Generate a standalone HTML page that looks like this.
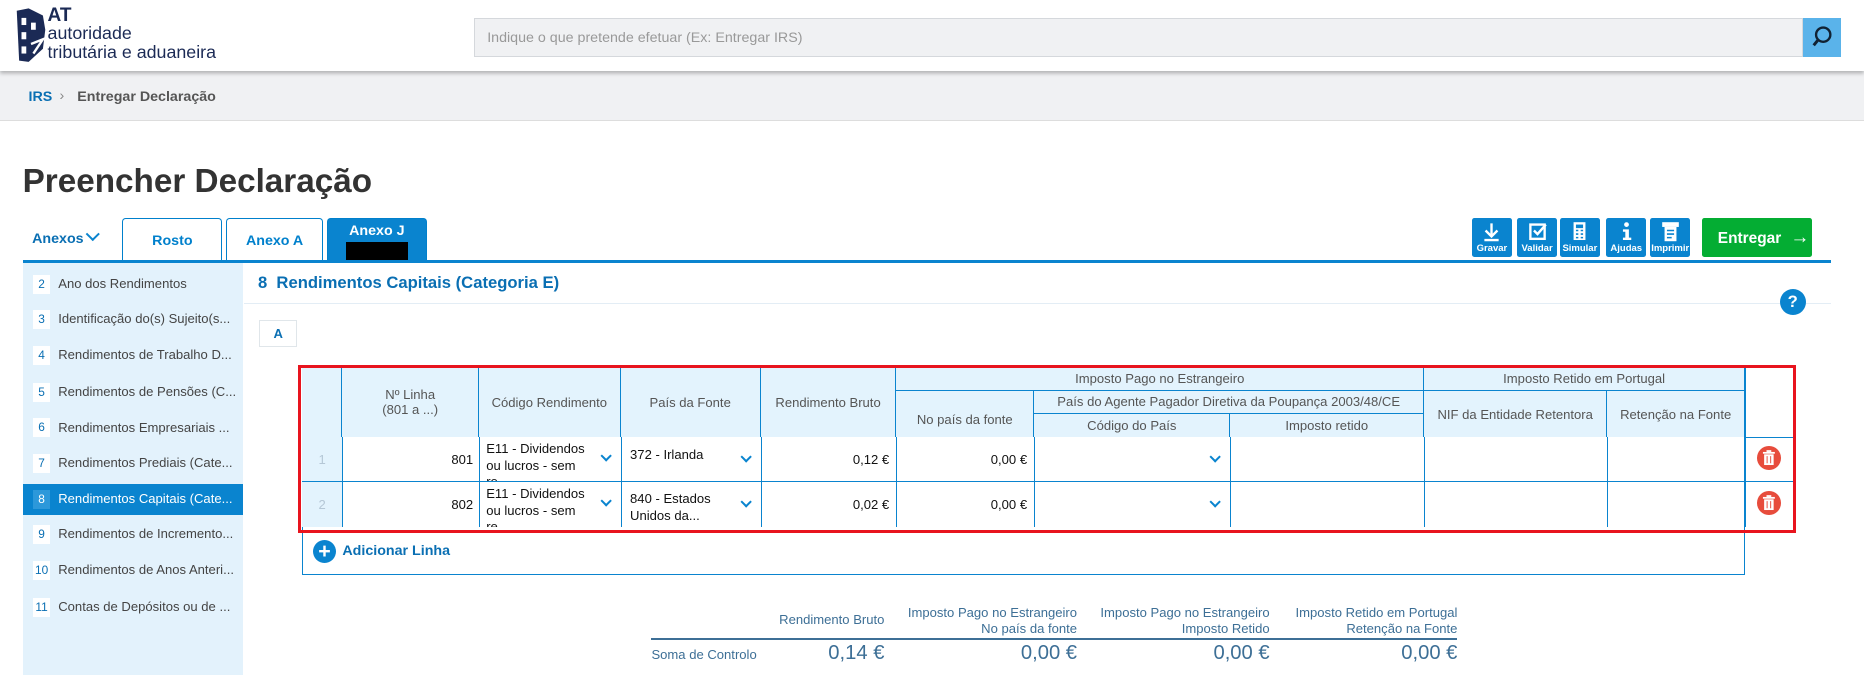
<!DOCTYPE html>
<html><head><meta charset="utf-8"><style>
*{box-sizing:border-box;margin:0;padding:0}
html,body{width:1864px;height:675px;overflow:hidden;background:#fff}
#w{zoom:1.18878;width:1568px;height:568px;position:relative;font-family:"Liberation Sans Narrow","Liberation Sans",sans-serif;color:#333;font-size:11px}
.a{position:absolute}
.hdr{left:0;top:0;width:1568px;height:60px;background:#fff;box-shadow:0 2px 3px rgba(0,0,0,.25);z-index:2}
.bc{left:0;top:60px;width:1568px;height:42px;background:#f0f1f3;border-bottom:1px solid #ddd}
.tab{top:183px;height:37px;border:1px solid #0080cc;border-bottom:none;border-radius:3px 3px 0 0;color:#0080cc;font-weight:bold;font-size:12px;text-align:center;padding-top:12px;background:#fff}
.btn{top:183px;width:34px;height:33px;background:#0a84cf;border-radius:2px;color:#fff;font-size:8px;font-weight:bold;text-align:center}
.btn span{position:absolute;bottom:2px;left:0;right:0}
.btn svg{position:absolute;left:9px;top:3px}
.side{left:19px;top:221px;width:185px;height:347px;background:#e3f2fc}
.si{left:0;width:185px;height:26px;font-size:11px;color:#444;line-height:26px;padding-left:30px}
.si b{position:absolute;left:9px;top:5px;width:14px;height:16px;background:#fff;color:#0a6fb3;font-weight:normal;text-align:center;line-height:16px;font-size:10px}
.si.on{background:#0a84cf;color:#fff}
.si.on b{background:#2c98da;color:#fff}
.th{background:#e3f3fd;color:#555;font-size:11px;text-align:center;border-right:1px solid #0a84cf;border-bottom:1px solid #0a84cf;display:flex;align-items:center;justify-content:center;line-height:13px}
.v{position:absolute;border-left:1px solid #0a84cf}
.h{position:absolute;border-top:1px solid #0a84cf}
.t{position:absolute;font-size:11px;color:#111;line-height:13px}
.r{text-align:right}
.chev{position:absolute;width:7px;height:7px;border-right:2px solid #0a84cf;border-bottom:2px solid #0a84cf;transform:rotate(45deg)}
.del{position:absolute;width:20px;height:20px;border-radius:50%;background:#e74c3c}
.sh{position:absolute;color:#3d6f96;font-size:11px;text-align:right;line-height:13px}
.sv{position:absolute;color:#3d6f96;font-size:17px;text-align:right}
</style></head><body><div id="w">
<div class="a hdr">
 <svg class="a" style="left:10px;top:5px" width="30" height="50" viewBox="0 0 30 50"><path d="M4 4 L14 2 L26 8 L28 20 L26 36 L14 47 L6 46 Z" fill="#1b2a55"/><rect x="8" y="10" width="4" height="6" fill="#fff"/><rect x="8" y="22" width="4" height="6" fill="#fff"/><rect x="16" y="14" width="4" height="6" fill="#fff"/><rect x="8" y="34" width="4" height="6" fill="#fff"/><path d="M16 32 L26 28 L18 40" stroke="#fff" stroke-width="2" fill="none"/></svg>
 <div class="a" style="left:40px;top:6px;font-family:'Liberation Sans',sans-serif;color:#1b2a55;line-height:15px">
  <div style="font-size:16px;font-weight:bold">AT</div>
  <div style="font-size:15px">autoridade</div>
  <div style="font-size:15px;margin-top:1px">tributária e aduaneira</div>
 </div>
 <div class="a" style="left:399px;top:15px;width:1118px;height:33px;background:#f0f1f3;border:1px solid #d5d8dc;color:#999;font-size:12px;padding:9px 10px">Indique o que pretende efetuar (Ex: Entregar IRS)</div>
 <div class="a" style="left:1517px;top:15px;width:32px;height:33px;background:#5ab3ea"><svg width="32" height="33"><circle cx="17" cy="14" r="6" stroke="#123" stroke-width="2" fill="none"/><line x1="13" y1="18" x2="9" y2="23" stroke="#123" stroke-width="2.5"/></svg></div>
</div>
<div class="a bc"><div class="a" style="left:24px;top:15px;font-size:12px;font-weight:bold;color:#0a6fb3">IRS</div><div class="a" style="left:50px;top:14px;color:#888;font-size:12px">›</div><div class="a" style="left:65px;top:15px;font-size:12px;font-weight:bold;color:#555">Entregar Declaração</div></div>
<div class="a" style="left:19px;top:137px;font-size:28px;font-weight:bold;color:#333">Preencher Declaração</div>
<div class="a" style="left:27px;top:194px;color:#0a6fb3;font-weight:bold;font-size:12px">Anexos</div>
<div class="chev" style="left:74px;top:193px;width:8px;height:8px;border-width:0 2px 2px 0"></div>
<div class="a tab" style="left:103px;width:84px">Rosto</div>
<div class="a tab" style="left:190px;width:82px">Anexo A</div>
<div class="a tab" style="left:275px;width:84px;background:#0a84cf;color:#fff;padding-top:4px">Anexo J<div style="margin:2px auto 0;width:52px;height:16px;background:#000"></div></div>
<div class="a" style="left:19px;top:219px;width:1521px;height:2px;background:#0a84cf"></div>
<div class="a btn" style="left:1238px"><svg width="16" height="18"><path d="M8 2v10M3 8l5 5 5-5M2 16h12" stroke="#fff" stroke-width="2" fill="none"/></svg><span>Gravar</span></div>
<div class="a btn" style="left:1276px"><svg width="16" height="18"><rect x="2" y="3" width="12" height="12" stroke="#fff" stroke-width="2" fill="none"/><path d="M5 8l3 3 7-8" stroke="#fff" stroke-width="2" fill="none"/></svg><span>Validar</span></div>
<div class="a btn" style="left:1312px"><svg width="16" height="18"><rect x="3" y="1" width="10" height="15" fill="#fff"/><rect x="5" y="3" width="6" height="3" fill="#0a84cf"/><path d="M5 8h2M9 8h2M5 11h2M9 11h2M5 14h2M9 14h2" stroke="#0a84cf" stroke-width="1.3"/></svg><span>Simular</span></div>
<div class="a btn" style="left:1351px"><svg width="16" height="18"><circle cx="8" cy="3" r="2" fill="#fff"/><path d="M5 7h5v7h2v2H5v-2h2V9H5z" fill="#fff"/></svg><span>Ajudas</span></div>
<div class="a btn" style="left:1388px"><svg width="16" height="18"><rect x="1" y="1" width="14" height="4" fill="#fff"/><rect x="3" y="5" width="10" height="12" fill="#fff"/><path d="M5 8h6M5 11h6M5 14h4" stroke="#0a84cf" stroke-width="1.3"/></svg><span>Imprimir</span></div>
<div class="a" style="left:1432px;top:183px;width:92px;height:33px;background:#04ad33;border-radius:2px;color:#fff;font-weight:bold;font-size:13px;padding:8px 0 0 13px">Entregar <span style="font-size:16px;font-weight:normal;margin-left:4px">→</span></div>
<div class="a side">
 <div class="a si" style="top:5px"><b>2</b>Ano dos Rendimentos</div>
 <div class="a si" style="top:35px"><b>3</b>Identificação do(s) Sujeito(s...</div>
 <div class="a si" style="top:65px"><b>4</b>Rendimentos de Trabalho D...</div>
 <div class="a si" style="top:96px"><b>5</b>Rendimentos de Pensões (C...</div>
 <div class="a si" style="top:126px"><b>6</b>Rendimentos Empresariais ...</div>
 <div class="a si" style="top:156px"><b>7</b>Rendimentos Prediais (Cate...</div>
 <div class="a si on" style="top:186px"><b>8</b>Rendimentos Capitais (Cate...</div>
 <div class="a si" style="top:216px"><b>9</b>Rendimentos de Incremento...</div>
 <div class="a si" style="top:246px"><b>10</b>Rendimentos de Anos Anteri...</div>
 <div class="a si" style="top:277px"><b>11</b>Contas de Depósitos ou de ...</div>
</div>
<div class="a" style="left:217px;top:230px;color:#0a6fb3;font-weight:bold;font-size:14px">8 &nbsp;Rendimentos Capitais (Categoria E)</div>
<div class="a" style="left:205px;top:255px;width:1335px;height:1px;background:#e3edf5"></div>
<div class="a" style="left:1497px;top:243px;width:22px;height:22px;border-radius:50%;background:#0a84cf;color:#fff;font-weight:bold;font-size:14px;text-align:center;line-height:22px;font-family:'Liberation Sans',sans-serif">?</div>
<div class="a" style="left:218px;top:269px;width:32px;height:23px;border:1px solid #e0e6ea;color:#0a6fb3;font-weight:bold;text-align:center;line-height:22px">A</div>
<!-- table -->
<div class="a" style="left:254px;top:309px;width:1214px;height:175px;border:1px solid #0a84cf;border-top:none"></div>
<div class="a" style="left:254px;top:368px;width:34px;height:75px;background:#e3f3fd"></div>
<div class="a th" style="left:254px;top:309px;width:34px;height:59px;border-bottom:none"></div>
<div class="a th" style="left:288px;top:309px;width:115px;height:59px;border-bottom:none">Nº Linha<br>(801 a ...)</div>
<div class="a th" style="left:403px;top:309px;width:119px;height:59px;border-bottom:none">Código Rendimento</div>
<div class="a th" style="left:522px;top:309px;width:118px;height:59px;border-bottom:none">País da Fonte</div>
<div class="a th" style="left:640px;top:309px;width:114px;height:59px;border-bottom:none">Rendimento Bruto</div>
<div class="a th" style="left:754px;top:309px;width:444px;height:20px">Imposto Pago no Estrangeiro</div>
<div class="a th" style="left:754px;top:329px;width:116px;height:39px;padding-top:10px;border-bottom:none">No país da fonte</div>
<div class="a th" style="left:870px;top:329px;width:328px;height:19px">País do Agente Pagador Diretiva da Poupança 2003/48/CE</div>
<div class="a th" style="left:870px;top:348px;width:165px;height:20px;border-bottom:none">Código do País</div>
<div class="a th" style="left:1035px;top:348px;width:163px;height:20px;border-bottom:none">Imposto retido</div>
<div class="a th" style="left:1198px;top:309px;width:270px;height:20px">Imposto Retido em Portugal</div>
<div class="a th" style="left:1198px;top:329px;width:154px;height:39px;border-bottom:none">NIF da Entidade Retentora</div>
<div class="a th" style="left:1352px;top:329px;width:116px;height:39px;border-bottom:none">Retenção na Fonte</div>
<div class="v" style="left:288px;top:368px;height:75px"></div><div class="v" style="left:403px;top:368px;height:75px"></div><div class="v" style="left:522px;top:368px;height:75px"></div><div class="v" style="left:640px;top:368px;height:75px"></div><div class="v" style="left:754px;top:368px;height:75px"></div><div class="v" style="left:870px;top:368px;height:75px"></div><div class="v" style="left:1035px;top:368px;height:75px"></div><div class="v" style="left:1198px;top:368px;height:75px"></div><div class="v" style="left:1352px;top:368px;height:75px"></div><div class="v" style="left:1468px;top:309px;height:134px"></div>
<div class="h" style="left:254px;top:405px;width:1256px"></div>
<div class="h" style="left:1468px;top:368px;width:42px"></div>
<div class="t" style="left:254px;top:380px;width:34px;text-align:center;color:#b5c7d6">1</div>
<div class="t" style="left:254px;top:418px;width:34px;text-align:center;color:#b5c7d6">2</div>
<div class="t r" style="left:288px;top:380px;width:110px">801</div>
<div class="t r" style="left:288px;top:418px;width:110px">802</div>
<div class="t" style="left:409px;top:371px;width:90px;height:34px;overflow:hidden;line-height:14px">E11 - Dividendos ou lucros - sem re...</div>
<div class="t" style="left:409px;top:409px;width:90px;height:34px;overflow:hidden;line-height:14px">E11 - Dividendos ou lucros - sem re...</div>
<div class="t" style="left:530px;top:376px">372 - Irlanda</div>
<div class="t" style="left:530px;top:413px;line-height:14px">840 - Estados<br>Unidos da...</div>
<div class="t r" style="left:640px;top:380px;width:108px">0,12 €</div>
<div class="t r" style="left:640px;top:418px;width:108px">0,02 €</div>
<div class="t r" style="left:754px;top:380px;width:110px">0,00 €</div>
<div class="t r" style="left:754px;top:418px;width:110px">0,00 €</div>
<div class="chev" style="left:506px;top:380px"></div><div class="chev" style="left:506px;top:418px"></div>
<div class="chev" style="left:624px;top:381px"></div><div class="chev" style="left:624px;top:419px"></div>
<div class="chev" style="left:1019px;top:381px"></div><div class="chev" style="left:1019px;top:419px"></div>
<div class="del" style="left:1478px;top:375px"><svg width="20" height="20"><rect x="6" y="7" width="8" height="9" fill="#fff"/><rect x="5" y="5" width="10" height="1.5" fill="#fff"/><rect x="8" y="3.5" width="4" height="1.5" fill="#fff"/><path d="M8.5 8.5v6M11.5 8.5v6" stroke="#e74c3c" stroke-width="0.8"/></svg></div>
<div class="del" style="left:1478px;top:413px"><svg width="20" height="20"><rect x="6" y="7" width="8" height="9" fill="#fff"/><rect x="5" y="5" width="10" height="1.5" fill="#fff"/><rect x="8" y="3.5" width="4" height="1.5" fill="#fff"/><path d="M8.5 8.5v6M11.5 8.5v6" stroke="#e74c3c" stroke-width="0.8"/></svg></div>
<div class="a" style="left:251px;top:307px;width:1260px;height:141px;border:3px solid #e8141e"></div>
<div class="a" style="left:263px;top:454px;width:20px;height:20px;border-radius:50%;background:#0a84cf;color:#fff;font-weight:bold;font-size:18px;text-align:center;line-height:20px;font-family:'Liberation Sans',sans-serif">+</div>
<div class="a" style="left:288px;top:457px;color:#0a6fb3;font-weight:bold;font-size:12px">Adicionar Linha</div>
<!-- summary -->
<div class="sh" style="left:600px;top:515px;width:144px">Rendimento Bruto</div>
<div class="sh" style="left:746px;top:509px;width:160px">Imposto Pago no Estrangeiro<br>No país da fonte</div>
<div class="sh" style="left:908px;top:509px;width:160px">Imposto Pago no Estrangeiro<br>Imposto Retido</div>
<div class="sh" style="left:1068px;top:509px;width:158px">Imposto Retido em Portugal<br>Retenção na Fonte</div>
<div class="a" style="left:548px;top:537px;width:678px;height:1px;background:#3d6f96"></div>
<div class="a" style="left:548px;top:544px;color:#3d6f96;font-size:11px">Soma de Controlo</div>
<div class="sv" style="left:600px;top:540px;width:144px">0,14 €</div>
<div class="sv" style="left:746px;top:540px;width:160px">0,00 €</div>
<div class="sv" style="left:908px;top:540px;width:160px">0,00 €</div>
<div class="sv" style="left:1068px;top:540px;width:158px">0,00 €</div>
</div></body></html>
